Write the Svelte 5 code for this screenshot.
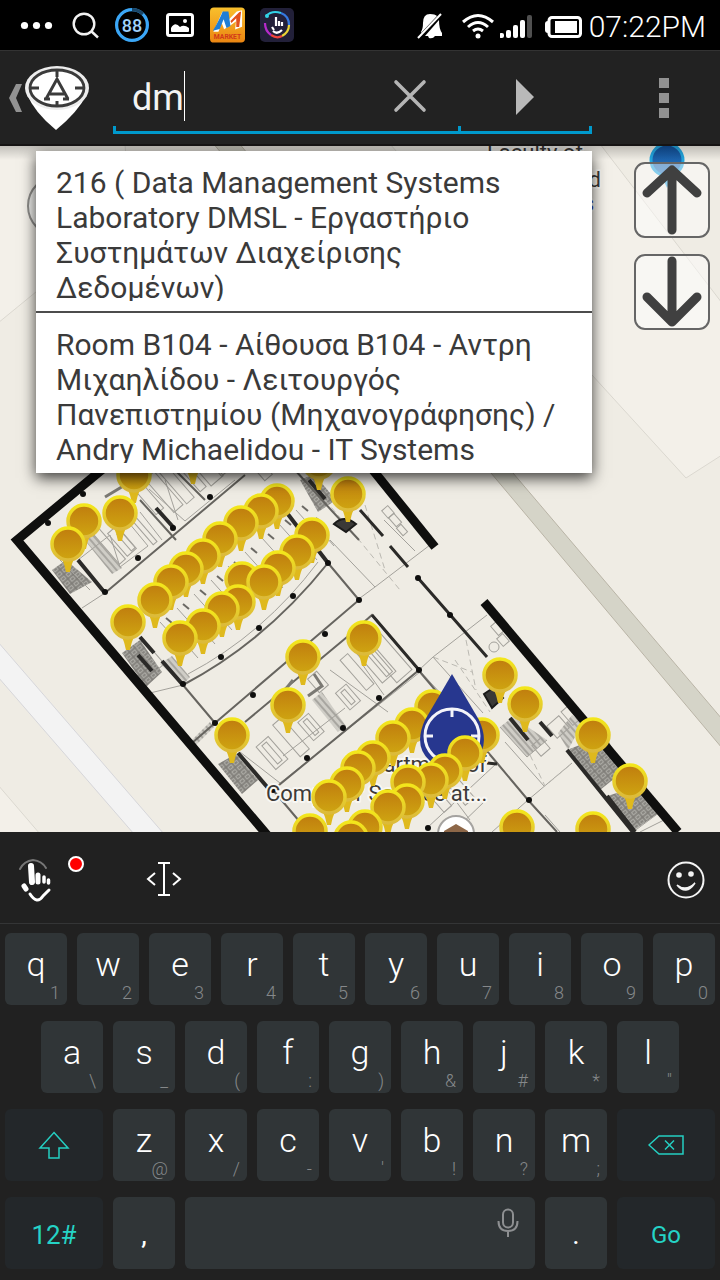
<script lang="ts">
  interface Key {
    label: string;
    hint?: string;
  }

  let query = $state('dm');

  const suggestions = [
    '216 ( Data Management Systems Laboratory DMSL - Εργαστήριο Συστημάτων Διαχείρισης Δεδομένων)',
    'Room B104 - Αίθουσα B104 - Αντρη Μιχαηλίδου - Λειτουργός Πανεπιστημίου (Μηχανογράφησης) / Andry Michaelidou - IT Systems'
  ];

  function keys(letters: string, hints: string): Key[] {
    return [...letters].map((label, i) => ({ label, hint: hints[i] }));
  }

  const topRow = keys('qwertyuiop', '1234567890');
  const homeRow = keys('asdfghjkl', '\\_(:)&#*"');
  const bottomRow = keys('zxcvbnm', "@/-'!?;");

  function type(char: string) {
    query += char;
  }

  // points of interest, drawn back to front
  const pinsBack = [
    [193, 456], [319, 462], [134, 475], [348, 494], [277, 501], [261, 511], [120, 513],
    [84, 521], [241, 523], [312, 535], [220, 539], [68, 544], [297, 552], [203, 556],
    [278, 568], [186, 569], [242, 579], [171, 582], [264, 582], [155, 600], [238, 602],
    [222, 609], [128, 622], [203, 626], [180, 638], [364, 638], [303, 657], [500, 675],
    [525, 704], [288, 705], [432, 707], [412, 725], [593, 735], [232, 735], [482, 735],
    [393, 738], [373, 758], [358, 768], [630, 781], [347, 784], [329, 797]
  ];
  const pinsFront = [
    [465, 753], [445, 771], [431, 780], [408, 782], [407, 801], [388, 807],
    [517, 827], [365, 827], [593, 829], [310, 831], [351, 838]
  ];

  const columns = [
    [83, 494], [173, 528], [138, 558], [210, 497], [293, 596], [259, 628], [221, 657],
    [183, 684], [325, 634], [253, 695], [307, 758], [343, 728], [379, 698], [419, 670],
    [215, 723], [359, 600], [418, 578], [450, 615], [428, 828], [529, 800],
    [273, 790], [105, 592], [48, 523], [328, 563]
  ];

  // x, y, width, height; all turned to the angle of the building
  const desks = [
    [108, 545, 44, 8], [122, 541, 30, 12], [126, 541, 22, 5], [142, 528, 40, 5],
    [164, 492, 44, 12], [176, 484, 44, 10], [190, 474, 40, 8], [206, 468, 34, 16],
    [218, 466, 20, 8], [150, 500, 30, 10], [272, 753, 30, 16], [272, 753, 24, 6],
    [291, 737, 42, 12], [311, 727, 24, 14], [311, 727, 18, 5], [348, 697, 22, 14],
    [348, 697, 16, 5], [357, 672, 40, 10], [376, 662, 40, 18], [379, 662, 32, 8],
    [386, 655, 56, 20], [318, 682, 18, 12], [541, 747, 14, 12], [558, 727, 16, 16],
    [570, 716, 18, 8], [395, 520, 12, 7], [402, 530, 10, 6], [388, 512, 10, 8],
    [498, 628, 12, 9], [503, 640, 10, 8], [150, 655, 32, 10], [460, 790, 30, 12],
    [440, 800, 24, 10], [262, 470, 20, 10]
  ];

  // walls between the offices, from the upper corridor to the outer wall
  const cells = Array.from({ length: 9 }, (_, i) => [160 + i * 17, 622 - i * 14]);
</script>

{#snippet pin(x: number, y: number)}
  <g transform="translate({x} {y})">
    <path d="M-9 12 C-4 17-4 20-2 28 H2 C4 20 4 17 9 12Z" fill="#dfb91d" />
    <circle r="16" fill="url(#pin-face)" stroke="url(#pin-rim)" stroke-width="3.500" />
  </g>
{/snippet}

{#snippet letterKey(key: Key)}
  <button class="key" type="button" onclick={() => type(key.label)}>
    <span class="letter" class:low={!key.hint}>{key.label}</span>
    {#if key.hint}<span class="hint">{key.hint}</span>{/if}
  </button>
{/snippet}

<div class="screen">
  <div class="status">
    <div class="status-left">
      <svg width="37" height="36" viewBox="20 7 37 36" fill="#fff">
        <circle cx="24.500" cy="25.500" r="3.600" />
        <circle cx="36.500" cy="25.500" r="3.600" />
        <circle cx="48.500" cy="25.500" r="3.600" />
      </svg>
      <svg width="28" height="36" viewBox="72 7 28 36" fill="none" stroke="#f2f2f2" stroke-width="2.400">
        <circle cx="84" cy="24" r="10.300" />
        <path d="M91 31 98 37.500" />
      </svg>
      <svg width="35" height="36" viewBox="115 7 35 36">
        <circle cx="132" cy="25" r="15.400" fill="none" stroke="#3ba7f7" stroke-width="3.200" />
        <path d="M132 9.600A15.400 15.400 0 0 1 143 14" fill="none" stroke="#1a4668" stroke-width="3.200" />
        <text class="badge" x="132" y="32" text-anchor="middle">88</text>
      </svg>
      <svg width="30" height="36" viewBox="165 7 30 36">
        <rect x="167.500" y="14.500" width="25" height="21" rx="2" fill="none" stroke="#fff" stroke-width="3" />
        <path d="M171 31v-3q4-7 9-1 4-3 9 1v3q0 1-1 1h-16q-1 0-1-1Z" fill="#fff" />
        <circle cx="185" cy="21" r="2" fill="#fff" />
      </svg>
      <svg width="35" height="36" viewBox="210 7 36 36">
        <rect x="210" y="7" width="36" height="36" rx="4" fill="url(#market)" />
        <path d="M215 31 223 13l5 9 10-10 4-1v15l-5 2 1-9-8 6-5 3-3-8-4 11Z" fill="#fff" stroke="#fff" stroke-width="2" />
        <path d="M213 31q8-14 10-20l6 0 2 15-4 2-3-9-4 10Z" fill="#1f7ed6" />
        <path d="m231 21 9-9 2-1-2 16-3 0 0-9-5 5Z" fill="#e2501c" />
        <text class="market" x="228" y="39" text-anchor="middle">MARKET</text>
      </svg>
      <svg width="34" height="36" viewBox="259 7 34 36" fill="none">
        <rect x="259" y="8" width="34" height="34" rx="5" fill="#222039" />
        <path d="M265 16q6-6 15-3" stroke="#32d3e8" stroke-width="2.200" />
        <path d="M280 13q8 3 8 12" stroke="#3578e0" stroke-width="2.200" />
        <path d="M288 25q0 7-7 11" stroke="#e8d435" stroke-width="2.200" />
        <path d="M281 36q-5 3-11-1" stroke="#f04439" stroke-width="2.200" />
        <path d="M270 35q-6-4-6-12" stroke="#b52aca" stroke-width="2.200" />
        <path d="M275 17v9M278 21v5M281 22v4M271 27l2 3M272 31q4 4 9-1" stroke="#fff" stroke-width="2.200" />
        <circle cx="266" cy="16" r="2" fill="#32d3e8" />
      </svg>
    </div>
    <div class="status-right">
      <svg width="39" height="36" viewBox="416 7 39 36">
        <path d="M420 32q2-3 2-9 0-9 7-9 5 0 7 2L420 33Zm18-12q0 9 3 13v3h-7q-2 3-6 2l-1-2h-3Z" fill="#fff" />
        <path d="M417 38 440 14" stroke="#fff" stroke-width="2" />
      </svg>
      <svg width="32" height="36" viewBox="462 7 32 36" fill="none" stroke="#fff" stroke-width="3">
        <path d="M463 22q15-13 30 0M468 27q10-9 20 0M473 31q5-4 10 0" />
        <circle cx="478" cy="36" r="2.500" fill="#fff" stroke="none" />
      </svg>
      <svg width="39" height="36" viewBox="500 7 39 36" fill="#fff">
        <rect x="499" y="33" width="5" height="5" rx="2" />
        <rect x="506" y="30" width="5" height="8" rx="2" />
        <rect x="513" y="25" width="5" height="13" rx="2" />
        <rect x="520" y="20" width="5" height="18" rx="2" />
        <rect x="527" y="15" width="5" height="23" rx="2" fill="#505050" />
      </svg>
      <svg width="38" height="36" viewBox="545 7 38 36">
        <path d="M548 21q-3 0-3 3v6q0 3 3 3Z" fill="#fff" />
        <rect x="549" y="17.500" width="31.500" height="19" rx="3" fill="none" stroke="#fff" stroke-width="3" />
        <rect x="555" y="21" width="22" height="12" fill="#fff" />
      </svg>
      <time>07:22PM</time>
    </div>
  </div>

  <header class="header">
    <button class="home" type="button" aria-label="Back">
      <svg width="82" height="66" viewBox="8 65 82 66">
        <path d="M16 84h6l-6 14 6 14h-6l-7-14Z" fill="#929292" />
        <path d="M27 94q7 18 29 36 22-18 31-36Z" fill="#fff" />
        <ellipse cx="57" cy="88" rx="32" ry="22" fill="#ededed" />
        <ellipse cx="57" cy="88" rx="27" ry="18" fill="#fff" stroke="#3b3b3b" stroke-width="2.800" />
        <path d="M57 69v8M57 101v6M30 88h9M75 88h9" stroke="#3b3b3b" stroke-width="3" />
        <path d="M46 99 57 79l11 20M50 94h14M44 99h6M63 99h6" fill="none" stroke="#3b3b3b" stroke-width="3" />
      </svg>
    </button>
    <form class="search" onsubmit={(e) => e.preventDefault()}>
      <div class="field">
        <input type="text" aria-label="Search" autocomplete="off" bind:value={query} />
        <span class="caret"></span>
        <button class="clear" type="button" aria-label="Clear" onclick={() => (query = '')}>
          <svg width="34" height="34" viewBox="0 0 34 34" stroke="#b5b5b5" stroke-width="3.600" stroke-linecap="round">
            <path d="M3 3 31 31M31 3 3 31" />
          </svg>
        </button>
      </div>
      <button class="go" type="submit" aria-label="Search now">
        <svg width="20" height="38" viewBox="0 0 20 38">
          <path d="M1 1 19 19 1 37Z" fill="#b9b9b9" />
        </svg>
      </button>
    </form>
    <button class="menu" type="button" aria-label="More options">
      <i></i><i></i><i></i>
    </button>
  </header>

  <main class="map">
    <svg class="canvas" viewBox="0 146 720 686" preserveAspectRatio="xMidYMid slice">
      <defs>
        <linearGradient id="pin-face" x2="0" y2="1">
          <stop offset="0" stop-color="#c07d0e" />
          <stop offset="1" stop-color="#cfa511" />
        </linearGradient>
        <linearGradient id="pin-rim" x2="0" y2="1">
          <stop offset="0" stop-color="#f3e61b" />
          <stop offset="1" stop-color="#dcba3a" />
        </linearGradient>
        <linearGradient id="market" x2="0" y2="1">
          <stop offset="0" stop-color="#f9c02c" />
          <stop offset="1" stop-color="#ea8512" />
        </linearGradient>
        <linearGradient id="blue-face" x2="0" y2="1">
          <stop offset="0" stop-color="#0f4a94" />
          <stop offset="1" stop-color="#2b7cc4" />
        </linearGradient>
        <pattern id="hatch" width="5" height="5" patternUnits="userSpaceOnUse" patternTransform="rotate(49)">
          <rect width="5" height="5" fill="#cfcdc6" />
          <path d="M0 1H5" stroke="#9b9993" stroke-width="1.500" />
        </pattern>
        <pattern id="dense" width="7" height="6" patternUnits="userSpaceOnUse" patternTransform="rotate(-40)">
          <rect width="7" height="6" fill="#aaa9a3" />
          <path d="M0 1H7M2 0V6M4 4h3" stroke="#7d7b76" stroke-width="1.500" />
        </pattern>
      </defs>

      <rect x="0" y="146" width="720" height="686" fill="#efece4" />
      <g fill="#f3f0e9" stroke="#dbd8d0">
        <path d="M-2 144V323L130 215 125 144Z" />
        <path d="M390 144 592 375 686 478 722 455V303L600 144Z" />
        <path d="M-2 785 40 834H-2Z" />
      </g>
      <path d="M212 142 491 473 722 748V719L513 473 238 142Z" fill="#d5d4c8" stroke="#b9b4a6" />
      <path d="M-2 642 164 834H134L-2 677Z" fill="#f3f3f3" stroke="#d6d6da" />

      <g fill="url(#hatch)">
        <path d="M52 570 66 560 92 582 70 594Z" fill="url(#dense)" />
        <path d="M83 538 92 533 122 568 112 574Z" />
        <path d="M122 653 140 640 162 672 146 687Z" fill="url(#dense)" />
        <path d="M160 664 172 656 190 677 183 685Z" />
        <path d="M218 764 236 754 258 780 242 794Z" fill="url(#dense)" />
        <path d="M312 700 322 692 346 726 338 732Z" />
        <path d="M192 740 210 722 214 727 196 745Z" />
        <path d="M300 480 314 474 336 500 318 512Z" fill="url(#dense)" />
        <path d="M500 727 513 717 547 740 527 757Z" />
        <path d="M558 733 572 715 582 724 568 750Z" />
        <path d="M567 750 605 735 625 770 600 790Z" fill="url(#dense)" />
        <path d="M607 796 640 786 660 812 633 831Z" fill="url(#dense)" />
      </g>

      <g fill="none" stroke="#a3a19b">
        {#each desks as [x, y, w, h]}
          <rect x={x - w / 2} y={y - h / 2} width={w} height={h} transform="rotate(49 {x} {y})" />
        {/each}
        {#each cells as [x, y]}
          <path d="M{x} {y} l18 20 M{x + 24} {y + 20} l14 16 M{x + 10} {y + 22} l10 -7" />
          <path d="M{x + 6} {y - 4} l6 5 M{x + 20} {y + 8} l5 4" stroke="#6b6964" stroke-width="2" />
        {/each}
        <path d="M78 560 110 535 120 567 148 546 110 500M140 512 162 540M149 489 185 521 235 480M165 480 178 520" />
        <path d="M430 545 375 587 360 598M375 587 330 540M415 551 384 520" />
        <path d="M487 615 433 657 483 713M419 670 480 736M433 657 419 670" />
        <path d="M240 752 280 783 420 672M283 756 345 708M330 670 388 712M384 695 362 664" />
        <path d="M572 763 528 800 492 832M544 786 505 742M500 727 527 757 547 740" />
        <path d="M497 763 427 828M480 750 420 806M470 820 440 780M455 830 486 800M560 832 545 815" />
        <path d="M183 685 150 693M105 593 82 608M90 590 60 560M633 832 660 812M640 832 668 818" />
        <path d="M325 500 359 540 400 590M365 505 385 570" stroke-dasharray="6 4" stroke="#bbb9b2" />
        <path d="M433 657 472 672M466 640 476 690M530 755 545 786 570 765M455 660 490 712" stroke-dasharray="6 4" stroke="#bbb9b2" />
        <circle cx="494" cy="647" r="5" />
      </g>

      <g fill="none" stroke="#66645f" stroke-width="2">
        <path d="M105 593 245 475M183 685Q265 642 328 563M183 685 215 723 359 600 328 563" />
        <path d="M245 722 347 637 372 615 419 670 273 790" />
        <path d="M176 540 140 500M205 500 175 470M420 672 497 763 528 800 557 832" />
        <path d="M273 790 305 828M295 470 332 511 359 540M192 743 215 723" />
        <path d="M188 674Q264 634 318 562" stroke="#a3a19b" stroke-width="1" />
      </g>

      <g fill="none" stroke="#2b2a28" stroke-width="4">
        <path d="M78 560 105 593M140 637 154 653M162 661 183 685M238 753 268 788M287 513 300 530M318 550 328 563" />
        <path d="M567 750 633 832M607 796 635 832M309 480 325 499M156 508 174 528M138 655 152 671M510 718 528 740M540 722 552 736" />
        <path d="M360 510 383 536M390 546 408 567M418 578 487 657M372 615 419 670M487 763 497 764" stroke-width="3" />
        <path d="M105 497 150 470M285 690 293 680M308 696 322 686 314 674" stroke-width="3" stroke="#7b7973" />
      </g>
      <g fill="none" stroke="#0f0f0e" stroke-width="9">
        <path d="M110 463 17 540 268 836" />
        <path d="M368 464 435 547" />
        <path d="M484 602 678 832" />
      </g>
      <path d="M334 524q10-10 22 0l-10 8ZM484 694l9-6 10 10-11 10Z" fill="#3a3937" stroke="#1b1b1a" stroke-width="2" />

      <g fill="#0f0f0e">
        {#each columns as [x, y]}
          <circle cx={x} cy={y} r="3" />
        {/each}
      </g>

      <circle cx="58" cy="206" r="30" fill="#efefec" stroke="#8e8d8a" stroke-width="2" />
      <circle cx="456" cy="834" r="18" fill="#fff" stroke="#a5a3a0" stroke-width="2" />
      <path d="M444 844V831l12-7 12 7v13Z" fill="#8d6748" />

      <g class="places">
        <text x="345" y="772">Department of</text>
        <text x="266" y="801">Computer Science at...</text>
        <text x="487" y="160">Faculty of</text>
        <text x="601" y="187" text-anchor="end">d</text>
        <text class="link" x="594" y="211" text-anchor="end">s</text>
      </g>

      <g transform="translate(667 160)">
        <path d="M-7 12 0 28 7 12Z" fill="#39a9e0" />
        <circle r="16" fill="url(#blue-face)" stroke="#22a3dc" stroke-width="3" />
      </g>

      {#each pinsBack as [x, y]}
        {@render pin(x, y)}
      {/each}

      <path d="M452 674 479 720Q491 746 474 761 452 777 430 761 413 746 425 720Z" fill="#27378f" />
      <g fill="none" stroke="#f4f4fa" stroke-width="3">
        <circle cx="452" cy="736" r="27" />
        <path d="M452 709v8M425 736h8M471 736h8" />
      </g>

      {#each pinsFront as [x, y]}
        {@render pin(x, y)}
      {/each}
    </svg>

    <ul class="suggestions">
      {#each suggestions as item}
        <li>
          <button type="button" onclick={() => (query = item)}>
            <span>{item}</span>
          </button>
        </li>
      {/each}
    </ul>

    <div class="floors">
      <button type="button" aria-label="Floor up">
        <svg width="72" height="72" viewBox="0 0 72 72">
          <path d="M36 66V8M11 29 36 6 61 29" />
        </svg>
      </button>
      <button type="button" aria-label="Floor down">
        <svg width="72" height="72" viewBox="0 0 72 72">
          <path d="M36 5V64M11 41 36 66 61 41" />
        </svg>
      </button>
    </div>
  </main>

  <section class="keyboard">
    <div class="tools">
      <button class="touch" type="button" aria-label="Keyboard menu">
        <svg width="72" height="52" viewBox="16 852 72 52" fill="none" stroke="#fff" stroke-linecap="round">
          <path d="M20 869Q24 861 33 860 42 861 46 868" stroke="#777" stroke-width="2" />
          <path d="M31 866 32 882" stroke-width="6" />
          <path d="M38 875V882" stroke-width="5" />
          <path d="M44 877V882M48.500 880V883" stroke-width="3.500" />
          <path d="M24 886 26 889" stroke-width="5" />
          <path d="M30 894Q37 905 43 896L49 890" stroke-width="3" />
          <circle cx="76" cy="864" r="7" fill="#f00" stroke-width="2" />
        </svg>
      </button>
      <button class="cursor" type="button" aria-label="Move cursor">
        <svg width="36" height="36" viewBox="0 0 36 36" fill="none" stroke="#fff" stroke-width="2">
          <path d="M12 2H24M18 2V34M12 34H24M9 12 2 18 9 24M27 12 34 18 27 24" />
        </svg>
      </button>
      <button class="smile" type="button" aria-label="Emoji">
        <svg width="38" height="38" viewBox="0 0 38 38" fill="none" stroke="#f4f4f4">
          <circle cx="19" cy="19" r="17.500" stroke-width="2" />
          <path d="M10 24Q19 35 28 22 19 31 10 24Z" fill="#f4f4f4" stroke-width="1.500" />
          <circle cx="12" cy="14" r="2.800" fill="#f4f4f4" stroke="none" />
          <circle cx="24" cy="13" r="2.800" fill="#f4f4f4" stroke="none" />
        </svg>
      </button>
    </div>

    <div class="rows">
      <div class="row">
        {#each topRow as key}{@render letterKey(key)}{/each}
      </div>
      <div class="row home-row">
        {#each homeRow as key}{@render letterKey(key)}{/each}
      </div>
      <div class="row">
        <button class="key wide" type="button" aria-label="Shift">
          <svg width="32" height="28" viewBox="0 0 32 28" fill="none" stroke="#25cfc2" stroke-width="1.500">
            <path d="M16 1.500 30 17H21V27H11V17H2Z" />
          </svg>
        </button>
        {#each bottomRow as key}{@render letterKey(key)}{/each}
        <button class="key wide" type="button" aria-label="Backspace" onclick={() => (query = query.slice(0, -1))}>
          <svg width="36" height="20" viewBox="0 0 36 20" fill="none" stroke="#25cfc2" stroke-width="1.500">
            <path d="M1 10 11 1H35V19H11ZM17 5.500 26 14.500M26 5.500 17 14.500" />
          </svg>
        </button>
      </div>
      <div class="row">
        <button class="key wide text" type="button">12#</button>
        {@render letterKey({ label: ',' })}
        <button class="key space" type="button" aria-label="Space" onclick={() => type(' ')}>
          <svg width="22" height="30" viewBox="0 0 22 30" fill="none" stroke="#8d8f91" stroke-width="2">
            <rect x="6" y="1.500" width="10" height="18" rx="5" />
            <path d="M1.500 13Q1.500 23 11 23 20.500 23 20.500 13M11 23V29" />
          </svg>
        </button>
        {@render letterKey({ label: '.' })}
        <button class="key wide text enter" type="button">Go</button>
      </div>
    </div>
  </section>
</div>

<style>
  :global(body) { margin: 0; background: #222; }
  .screen {
    display: flex;
    flex-direction: column;
    min-height: 100vh;
    font-family: Roboto, 'Noto Sans', sans-serif;
  }
  button {
    padding: 0;
    border: none;
    background: none;
    color: inherit;
    font: inherit;
    cursor: pointer;
  }
  svg { display: block; }

  .status {
    display: flex;
    justify-content: space-between;
    align-items: center;
    height: 50px;
    padding: 0 14px 0 20px;
    background: #000;
    color: #fff;
  }
  .status-left { display: flex; gap: 15px; }
  .status-right { display: flex; align-items: center; gap: 6px; }
  .badge { font-size: 18px; font-weight: 500; fill: #9fd2fb; }
  .market { font-size: 7px; font-weight: 700; fill: #d2391a; }
  time { font-size: 30px; font-weight: 300; line-height: 36px; margin-top: 4px; }

  .header {
    display: flex;
    align-items: stretch;
    height: 96px;
    box-sizing: border-box;
    border-top: 1px solid #333;
    border-bottom: 2px solid #161414;
    background: #222;
  }
  .home { padding: 0 23px 0 8px; }
  .search {
    flex: 1;
    display: flex;
    margin-bottom: 10px;
    background:
      linear-gradient(#0099cc, #0099cc) left bottom / 3px 5px no-repeat,
      linear-gradient(#0099cc, #0099cc) right bottom / 3px 5px no-repeat;
    border-bottom: 3px solid #0099cc;
  }
  .field {
    flex: 1;
    display: flex;
    align-items: center;
    padding: 10px 34px 0 19px;
    background: linear-gradient(#0099cc, #0099cc) right bottom / 3px 5px no-repeat;
  }
  .field input {
    field-sizing: content;
    max-width: 240px;
    padding: 4px 0 0;
    border: none;
    outline: none;
    background: none;
    color: #f3f3f3;
    font: 36px/46px Roboto, 'Noto Sans', sans-serif;
  }
  .caret { width: 1px; height: 50px; background: #fff; }
  .clear { margin-left: auto; }
  .go { display: grid; place-items: center; width: 131px; padding: 12px 3px 0 0; }
  .menu {
    display: flex;
    flex-direction: column;
    align-items: center;
    justify-content: center;
    gap: 5px;
    width: 128px;
    padding-left: 16px;
  }
  .menu i { width: 10px; height: 10px; background: #929292; }

  .map {
    position: relative;
    flex: 1;
    min-height: 480px;
    overflow: hidden;
  }
  .map::before {
    content: '';
    position: absolute;
    z-index: 1;
    inset: 0 0 auto;
    height: 14px;
    background: linear-gradient(rgba(0, 0, 0, 0.2), transparent);
  }
  .canvas { position: absolute; inset: 0; width: 100%; height: 100%; }
  .places {
    font-size: 22px;
    fill: #3d3a38;
    stroke: #f8f7f3;
    stroke-width: 4px;
    stroke-linejoin: round;
    paint-order: stroke;
  }
  .link { fill: #2a2fae; }

  .suggestions {
    position: absolute;
    z-index: 2;
    top: 5px;
    left: 36px;
    right: 128px;
    margin: 0;
    padding: 0;
    list-style: none;
    background: #fff;
    box-shadow: 0 5px 14px rgba(0, 0, 0, 0.75);
  }
  .suggestions li + li { border-top: 2px solid #4c4c4c; }
  .suggestions button {
    display: block;
    width: 100%;
    padding: 14px 20px 10px;
    color: #3a3a3a;
    font-size: 30px;
    line-height: 35px;
    text-align: left;
  }
  .suggestions span { display: block; height: 136px; overflow: hidden; }

  .floors {
    position: absolute;
    z-index: 2;
    top: 16px;
    right: 10px;
    display: grid;
    gap: 16px;
  }
  .floors button {
    border: 2px solid #666;
    border-radius: 11px;
    background: rgba(255, 255, 255, 0.45);
  }
  .floors path {
    fill: none;
    stroke: #404040;
    stroke-width: 9px;
    stroke-linecap: round;
    stroke-linejoin: round;
  }

  .keyboard { background: #212121; color: #fff; }
  .tools {
    display: flex;
    align-items: center;
    height: 91px;
    padding: 0 15px 0 16px;
    border-bottom: 1px solid #343536;
  }
  .cursor { margin: 2px 0 0 58px; }
  .smile { margin: 4px 0 0 auto; }
  .rows { display: grid; gap: 16px; padding: 9px 0 11px; }
  .row {
    display: grid;
    grid-template-columns: repeat(20, 1fr);
    grid-auto-rows: 72px;
  }
  .home-row .key:first-child { grid-column: 2 / span 2; }
  .key {
    grid-column: span 2;
    display: flex;
    flex-direction: column;
    align-items: center;
    margin: 0 5px;
    border-radius: 6px;
    background: #303537;
  }
  .letter { padding-top: 11px; font-size: 34px; font-weight: 300; line-height: 40px; }
  .low { padding-top: 18px; font-size: 28px; font-weight: 400; }
  .hint {
    align-self: flex-end;
    padding-right: 7px;
    color: #85888a;
    font-size: 18px;
    font-weight: 300;
    line-height: 18px;
  }
  .wide {
    grid-column: span 3;
    justify-content: center;
    background: #23272a;
    color: #25d3c6;
    font-size: 26px;
  }
  .text { padding-top: 3px; }
  .enter { font-size: 24px; }
  .space {
    grid-column: span 10;
    align-items: flex-end;
    padding: 11px 16px 0 0;
  }
</style>
